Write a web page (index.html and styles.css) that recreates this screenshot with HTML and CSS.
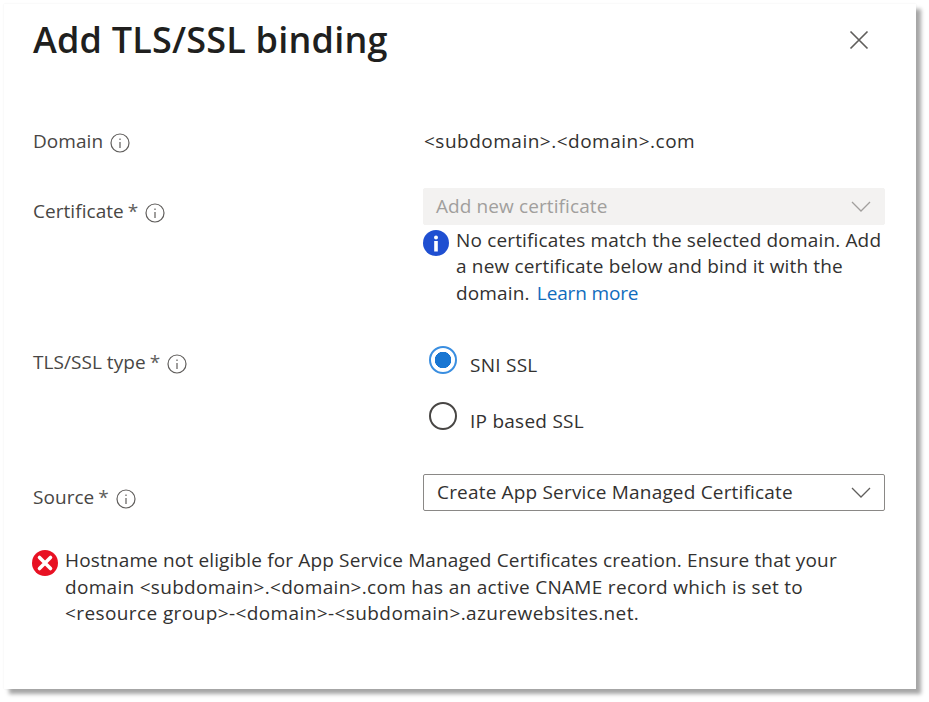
FILE: index.html

```html
<!DOCTYPE html>
<html lang="en">
<head>
  <meta charset="UTF-8" />
  <title>Add TLS/SSL binding</title>
  <link rel="stylesheet" href="styles.css">
</head>
<body>
  <div class="panel">
    <header class="panel-header">
      <h1>Add TLS/SSL binding</h1>
      <svg class="close-icon" width="20" height="20" viewBox="0 0 20 20"><path d="M1.5 1.5 L18.5 18.5 M18.5 1.5 L1.5 18.5" /></svg>
    </header>

    <div class="row row-domain">
      <div class="label">Domain <svg class="info-icon" width="20" height="20" viewBox="0 0 20 20"><circle cx="10" cy="10" r="9"/><path d="M10 9 V15 M10 5.5 V7"/></svg></div>
      <div class="value domain-value">&lt;subdomain&gt;.&lt;domain&gt;.com</div>
    </div>

    <div class="row row-cert">
      <div class="label">Certificate <span class="star">*</span> <svg class="info-icon" width="20" height="20" viewBox="0 0 20 20"><circle cx="10" cy="10" r="9"/><path d="M10 9 V15 M10 5.5 V7"/></svg></div>
      <div class="value">
        <div class="dropdown disabled">
          <span>Add new certificate</span>
          <svg class="chevron" width="20" height="11" viewBox="0 0 20 11"><path d="M1 1 L10 10 L19 1"/></svg>
        </div>
        <div class="notice">
          <svg class="notice-icon" width="26" height="26" viewBox="0 0 26 26"><circle cx="13" cy="13" r="13" fill="#1f4fd1"/><circle cx="13" cy="7.5" r="2" fill="#fff"/><rect x="11.2" y="11" width="3.6" height="10.5" fill="#fff"/></svg>
          <p>No certificates match the selected domain. Add a new certificate below and bind it with the domain. <a href="#">Learn more</a></p>
        </div>
      </div>
    </div>

    <div class="row row-type">
      <div class="label">TLS/SSL type <span class="star">*</span> <svg class="info-icon" width="20" height="20" viewBox="0 0 20 20"><circle cx="10" cy="10" r="9"/><path d="M10 9 V15 M10 5.5 V7"/></svg></div>
      <div class="value radios">
        <div class="radio-row"><span class="radio checked"></span><span class="radio-text">SNI SSL</span></div>
        <div class="radio-row"><span class="radio"></span><span class="radio-text">IP based SSL</span></div>
      </div>
    </div>

    <div class="row row-source">
      <div class="label">Source <span class="star">*</span> <svg class="info-icon" width="20" height="20" viewBox="0 0 20 20"><circle cx="10" cy="10" r="9"/><path d="M10 9 V15 M10 5.5 V7"/></svg></div>
      <div class="value">
        <div class="dropdown">
          <span>Create App Service Managed Certificate</span>
          <svg class="chevron" width="20" height="11" viewBox="0 0 20 11"><path d="M1 1 L10 10 L19 1"/></svg>
        </div>
      </div>
    </div>

    <div class="error">
      <svg class="notice-icon" width="26" height="26" viewBox="0 0 26 26"><circle cx="13" cy="13" r="13" fill="#e81123"/><path d="M7.5 7.5 L18.5 18.5 M18.5 7.5 L7.5 18.5" stroke="#fff" stroke-width="3.6" stroke-linecap="round" fill="none"/></svg>
      <p>
        <span class="error-line first">Hostname not eligible for App Service Managed Certificates creation. Ensure that your</span>
        <span class="error-line second">domain &lt;subdomain&gt;.&lt;domain&gt;.com has an active CNAME record which is set to</span>
        <span class="error-line third">&lt;resource group&gt;-&lt;domain&gt;-&lt;subdomain&gt;.azurewebsites.net.</span>
      </p>
    </div>
  </div>
</body>
</html>
```

FILE: styles.css

```css
html, body {
  height: 100%;
}
body {
  margin: 0;
  background: #fff;
  color: #323130;
  font-family: "Open Sans", "Noto Sans", sans-serif;
  font-size: 19px;
  line-height: 26.5px;
  letter-spacing: 0.05px;
  overflow: hidden;
}
.panel {
  box-sizing: border-box;
  width: 912px;
  height: 685px;
  margin: 4px 0 0 4px;
  padding: 0 31px 0 29px;
  background: #fff;
  box-shadow: 5px 5px 4px #a6a6a6, 0 0 2px #eee;
}
.panel-header {
  display: flex;
  justify-content: space-between;
  align-items: center;
  padding-top: 13px;
  height: 46px;
}
.panel-header h1 {
  margin: 0;
  font-size: 36px;
  font-weight: 600;
  line-height: 46px;
  letter-spacing: 0.2px;
  color: #201f1e;
}
.close-icon {
  margin-right: 16px;
  margin-top: -1px;
}
.close-icon path {
  stroke: #605e5c;
  stroke-width: 1.7;
  fill: none;
}
.row {
  display: flex;
}
.row-domain {
  margin-top: 65px;
}
.row-cert {
  margin-top: 33px;
}
.row-type {
  margin-top: 43px;
}
.row-source {
  margin-top: 44px;
}
.label {
  width: 390px;
  flex: none;
  display: flex;
  align-items: center;
  align-self: flex-start;
  gap: 4px;
  height: 26px;
  color: #484644;
}
.row-cert .label {
  margin-top: 11px;
}
.row-source .label {
  margin-top: 10px;
}
.star {
  color: #605e5c;
}
.info-icon {
  margin-left: 3px;
  margin-top: 3px;
}
.info-icon circle, .info-icon path {
  fill: none;
  stroke: #605e5c;
  stroke-width: 1.2;
}
.value {
  flex: 1;
}
.domain-value {
  padding-left: 1px;
  letter-spacing: 0.5px;
}
.dropdown {
  box-sizing: border-box;
  display: flex;
  justify-content: space-between;
  align-items: center;
  height: 37px;
  padding: 0 13px;
  border: 1px solid #8a8886;
  border-radius: 2px;
  letter-spacing: 0.18px;
}
.dropdown.disabled {
  background: #f3f2f1;
  border-color: #f3f2f1;
  color: #a19f9d;
  padding-left: 12px;
  letter-spacing: 0.1px;
}
.chevron path {
  fill: none;
  stroke: #605e5c;
  stroke-width: 1.3;
}
.disabled .chevron path {
  stroke: #a19f9d;
}
.notice, .error {
  display: flex;
  gap: 7px;
}
.notice {
  margin-top: 2px;
  letter-spacing: 0.16px;
}
.notice p, .error p {
  margin: 0;
}
.notice-icon {
  flex: none;
  margin-top: 3px;
}
.notice a {
  color: #0f6cbd;
  text-decoration: none;
  margin-left: 2px;
  letter-spacing: -0.15px;
}
.radios {
  display: flex;
  flex-direction: column;
  gap: 28px;
  padding: 0 0 0 6px;
  margin-top: -3px;
}
.radio-row {
  display: flex;
  gap: 13px;
  height: 28px;
}
.radio {
  box-sizing: border-box;
  flex: none;
  width: 28px;
  height: 28px;
  border: 2px solid #484644;
  border-radius: 50%;
}
.radio.checked {
  border-color: #3a8ee0;
  background: radial-gradient(circle, #1976d2 0 8px, #fff 8.5px);
}
.radio-text {
  padding-top: 6px;
  letter-spacing: 0.25px;
}
.error {
  margin-top: 36px;
  margin-left: -1px;
  width: 810px;
}
.error-line {
  display: block;
  white-space: nowrap;
}
.error-line.first {
  letter-spacing: 0.15px;
}
.error-line.second {
  letter-spacing: 0.3px;
}
.error-line.third {
  letter-spacing: 0.4px;
}
```
